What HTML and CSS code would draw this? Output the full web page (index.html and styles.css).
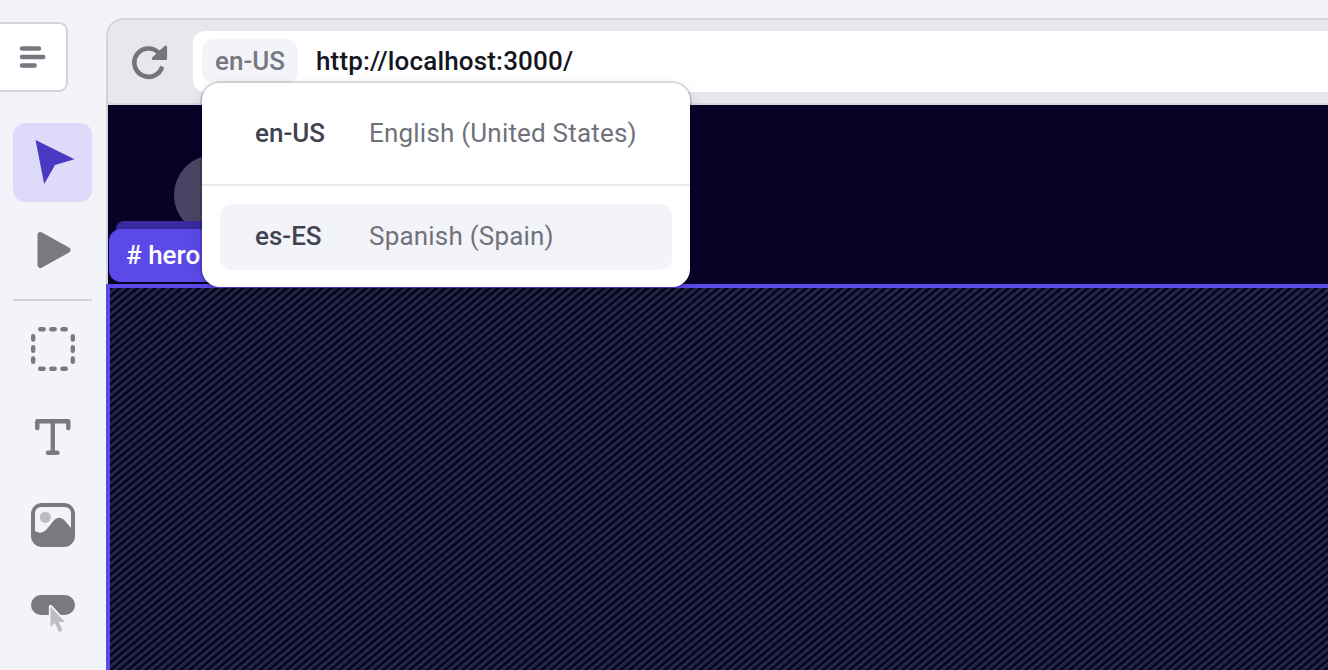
FILE: index.html
```html
<!DOCTYPE html>
<html lang="en">
<head>
<meta charset="utf-8">
<title>Editor</title>
<link rel="stylesheet" href="styles.css">
</head>
<body>
<div class="app">
  <aside class="sidebar">
    <button class="menu" aria-label="Menu">
      <svg width="28" height="26" viewBox="0 0 28 26"><path d="M3 4.500H20M3 13H24.300M3 21.500H15.700" stroke="#76777f" stroke-width="4.400" stroke-linecap="round"/></svg>
    </button>
    <nav class="tools">
      <button class="tool active" aria-label="Select">
        <svg width="44" height="48" viewBox="0 0 44 48"><path d="M4.500 2L43.500 21.200L24 27L13.200 46Z" fill="#4b39c4"/></svg>
      </button>
      <button class="tool play" aria-label="Preview">
        <svg width="40" height="40" viewBox="0 0 40 40"><path d="M7.500 5L34.500 20L7.500 35Z" fill="#7b797f" stroke="#7b797f" stroke-width="6" stroke-linejoin="round"/></svg>
      </button>
      <hr class="rule">
      <button class="tool box" aria-label="Box">
        <svg width="44" height="44" viewBox="0 0 44 44" fill="none" stroke="#7b797f" stroke-width="4.400" stroke-linecap="round"><path d="M9.200 2.200h3.400M20.300 2.200h3.400M31.400 2.200h3.400M9.200 41.800h3.400M20.300 41.800h3.400M31.400 41.800h3.400M2.200 9.200v3.400M2.200 20.300v3.400M2.200 31.400v3.400M41.800 9.200v3.400M41.800 20.300v3.400M41.800 31.400v3.400"/></svg>
      </button>
      <button class="tool type" aria-label="Text">
        <svg width="36" height="36" viewBox="0 0 36 36" fill="none" stroke="#7b797f" stroke-linecap="round" stroke-linejoin="round" stroke-width="4.400"><path d="M2.300 9V2.300H33.300V9M17.800 2.500V33.500M13 33.700H22.500"/></svg>
      </button>
      <button class="tool image" aria-label="Image">
        <svg width="44" height="44" viewBox="0 0 44 44"><rect width="44" height="44" rx="11" fill="#7b797f"/><path d="M4 11Q4 4 11 4H33Q40 4 40 11V25L34.500 18.500Q28 11 22 18.500L15 27Q10 32 4 28Z" fill="#f3f4fa"/><circle cx="14.300" cy="14.300" r="5.600" fill="#bdbcc1"/></svg>
      </button>
      <button class="tool link" aria-label="Button">
        <svg width="44" height="38" viewBox="0 0 44 38"><rect width="44" height="20" rx="10" fill="#7b797f"/><path d="M19.500 11.500V32L24 28L28 37L31.500 35.500L27.800 27H34Z" fill="#bdbcc1" stroke="#f3f4fa" stroke-width="3.400" stroke-linejoin="round" paint-order="stroke"/></svg>
      </button>
    </nav>
  </aside>
  <main class="browser">
    <header class="bar">
      <svg class="reload" width="38" height="38" viewBox="0 0 38 38"><path d="M30.500 25.500A14.200 14.200 0 1 1 27.500 9.500" fill="none" stroke="#76747b" stroke-width="4.600" stroke-linecap="round"/><path d="M34.600 4V15.500H22.200Z" fill="#76747b" stroke="#76747b" stroke-width="3" stroke-linejoin="round"/></svg>
      <div class="address">
        <div class="locale">en-US
          <div class="dropdown">
            <div class="current"><span class="code">en-US</span><span class="name">English (United States)</span></div>
            <div class="options"><div class="option"><span class="code">es-ES</span><span class="name">Spanish (Spain)</span></div></div>
          </div>
        </div>
        <span class="url">http://localhost:3000/</span>
      </div>
    </header>
    <section class="page">
      <div class="avatar"></div>
      <div class="tag"># hero</div>
    </section>
    <section class="hero"></section>
  </main>
</div>
</body>
</html>
```

FILE: styles.css
```css
* { box-sizing: border-box; }
body {
  margin: 0;
  background: #f3f4fa;
  font: 500 26px/30px Roboto, sans-serif;
  overflow: hidden;
}
button { padding: 0; border: 0; background: none; }
svg { display: block; }
.app { display: flex; height: 670px; }
.sidebar { width: 106px; flex: none; padding-top: 22px; }
.menu {
  display: block;
  width: 68px;
  height: 70px;
  padding-left: 19px;
  border: 2px solid #d3d4da;
  border-left: 0;
  border-radius: 0 9px 9px 0;
  background: #fff;
}
.tools { display: flex; flex-direction: column; padding: 31px 14px 0 13px; }
.tool {
  display: flex;
  align-items: center;
  justify-content: center;
  height: 79px;
  border-radius: 12px;
}
.active { background: #dedafa; }
.active svg { margin-top: -2px; margin-left: 0; }
.play { height: 97px; }
.play svg { margin-left: 1px; margin-top: -2px; }
.rule { width: 79px; height: 2px; margin: 0; border: 0; background: #d3d4da; }
.box { height: 96px; }
.type { height: 80px; }
.image { height: 96px; }
.link { height: 82px; }
.browser {
  display: flex;
  flex-direction: column;
  flex: 1;
  min-width: 0;
  margin-top: 18px;
  border: 2px solid #d3d4da;
  border-width: 2px 0 0 2px;
  border-top-left-radius: 18px;
}
.bar {
  position: relative;
  z-index: 1;
  display: flex;
  align-items: center;
  gap: 24px;
  height: 85px;
  flex: none;
  padding-left: 23px;
  border-bottom: 2px solid #d8d8e3;
  border-top-left-radius: 16px;
  background: #e8e7ed;
}
.address {
  display: flex;
  align-items: center;
  flex: 1;
  height: 61px;
  padding: 0 0 2px 9px;
  border-radius: 12px 0 0 12px;
  background: #fff;
}
.locale {
  position: relative;
  width: 96px;
  height: 44px;
  padding: 7px 0 0 13px;
  border-radius: 12px;
  background: #f3f4fa;
  color: #76777f;
}
.url { margin-left: 18px; color: #14151d; letter-spacing: .17px; }
.dropdown {
  position: absolute;
  z-index: 2;
  top: 44px;
  left: 0;
  width: 488px;
  height: 204px;
  border-radius: 18px;
  background: #fff;
  box-shadow: 0 0 0 2px rgba(0, 0, 0, .13), 0 4px 14px rgba(0, 0, 0, .12);
}
.current {
  display: flex;
  align-items: center;
  height: 103px;
  padding-left: 53px;
  border-bottom: 2px solid #e8e7ea;
}
.code { width: 114px; color: #414350; }
.name { color: #70727a; font-weight: 400; letter-spacing: .2px; }
.options { padding: 18px; }
.option {
  display: flex;
  align-items: center;
  height: 66px;
  padding: 0 0 2px 35px;
  border-radius: 12px;
  background: #f3f4fa;
}
.page { position: relative; z-index: 0; height: 179px; flex: none; background: #0a0127; }
.page::before {
  content: "";
  position: absolute;
  z-index: 1;
  top: 116px;
  left: 8px;
  width: 160px;
  height: 20px;
  border-radius: 8px;
  background: #3a2a9f;
}
.avatar {
  position: absolute;
  top: 50px;
  left: 66px;
  width: 80px;
  height: 80px;
  border-radius: 50%;
  background: #4b4565;
}
.tag {
  position: absolute;
  z-index: 2;
  top: 124px;
  left: 1px;
  width: 180px;
  height: 53px;
  padding: 11px 0 0 17px;
  border-radius: 12px;
  background: #5b49e8;
  color: #fff;
}
.hero {
  flex: 1;
  margin-left: -2px;
  border: 4px solid #5b49e8;
  border-width: 4px 0 0 4px;
  background: repeating-linear-gradient(140.200deg, #080124 0 1.500px, #1f2a42 2.500px 4.700px, #080124 5.632px) 0 0 / 44px 44px;
}
```
